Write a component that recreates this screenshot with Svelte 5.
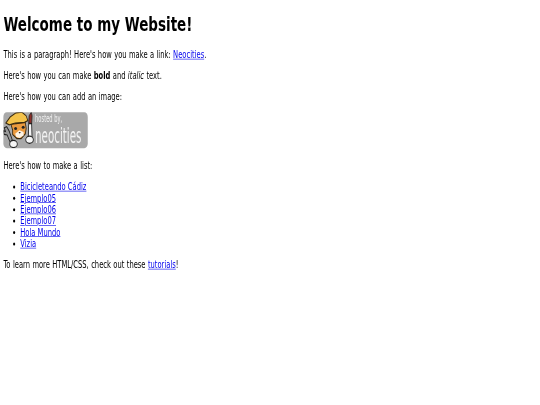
<script>
  const projects = ["Bicicleteando Cádiz", "Ejemplo05", "Ejemplo06", "Ejemplo07", "Hola Mundo", "Vizia"];
</script>

<div class="frame">
  <main class="page">
    <h1>Welcome to my Website!</h1>
    <p>This is a paragraph! Here's how you make a link: <a href="#neocities">Neocities</a>.</p>
    <p>Here's how you can make <strong>bold</strong> and <em>italic</em> text.</p>
    <p>Here's how you can add an image:</p>
    <div class="badge">
      <svg class="mascot" viewBox="0 0 75 60" aria-hidden="true">
        <path d="M60 18l1-12 5-6 2 6-1 13z" fill="#8c2f2a" stroke="#222" stroke-width="1.500" />
        <path d="M60 19h7l1 24h-9z" fill="#f4f4f4" stroke="#222" stroke-width="2" />
        <ellipse cx="62" cy="46" rx="9" ry="6" fill="#f6f6f6" stroke="#222" stroke-width="2" />
        <path d="M2 26l6-2 6 8 7 14-5 4-7-12-7-1-2-6 5 1z" fill="#9a9a9a" stroke="#222" stroke-width="2" />
        <ellipse cx="24" cy="53" rx="9" ry="6" fill="#f6f6f6" stroke="#222" stroke-width="2" />
        <path d="M18 20l4 10 0 7 10 7h10l10-8 2-9-2-10-22 2z" fill="#eb9a3e" stroke="#3a2a10" stroke-width="2" />
        <path d="M28 36l10-6 10 3 0 6-10 4-8-2z" fill="#fdf3e4" />
        <ellipse cx="29" cy="27" rx="3.500" ry="2.500" fill="#222" />
        <ellipse cx="47" cy="25" rx="3.500" ry="2.500" fill="#222" />
        <path d="M36 33h5l-2 3z" fill="#222" />
        <path d="M6 18l10-10 14-7 14-1 10 6 4 8-8 3-22 1-14 3z" fill="#f3c24a" stroke="#3a2a10" stroke-width="2" />
      </svg>
      <div class="badge-text">
        <span class="hosted">hosted by,</span>
        <span class="brand">neocities</span>
      </div>
    </div>
    <p>Here's how to make a list:</p>
    <ul>
      {#each projects as name}
        <li><a href="#project">{name}</a></li>
      {/each}
    </ul>
    <p>To learn more HTML/CSS, check out these <a href="#tutorials">tutorials</a>!</p>
  </main>
</div>

<style>
  :global(body) {
    margin: 0;
    background: #fff;
  }
  .frame {
    height: 405px;
    overflow: hidden;
  }
  /* the shot is a 1280x675 page squashed unevenly, so lay out full size and scale */
  .page {
    width: 1280px;
    padding: 1px 8px 0;
    box-sizing: border-box;
    font-family: "DejaVu Sans", sans-serif;
    font-size: 16px;
    line-height: 19px;
    color: #000;
    transform: scale(0.4219, 0.6);
    transform-origin: 0 0;
    filter: blur(0.5px);
  }
  h1 {
    margin: 21.44px 0;
    font-size: 32px;
    line-height: 38px;
  }
  p {
    margin: 16px 0;
    word-spacing: 0.6px;
  }
  a {
    color: #00e;
  }
  .badge {
    display: flex;
    align-items: center;
    width: 200px;
    height: 60px;
    margin-bottom: 20px;
    border-radius: 8px;
    background: #a9a9a9;
    overflow: hidden;
  }
  .mascot {
    flex: none;
    width: 75px;
    height: 60px;
  }
  .badge-text {
    display: flex;
    flex-direction: column;
    color: #f2f2f2;
    white-space: nowrap;
    transform-origin: 0 50%;
    transform: scaleX(0.72);
  }
  .hosted {
    font-size: 17px;
    line-height: 20px;
  }
  .brand {
    font-size: 34px;
    line-height: 40px;
  }
  ul {
    margin: 16px 0;
    padding-left: 40px;
  }
</style>
